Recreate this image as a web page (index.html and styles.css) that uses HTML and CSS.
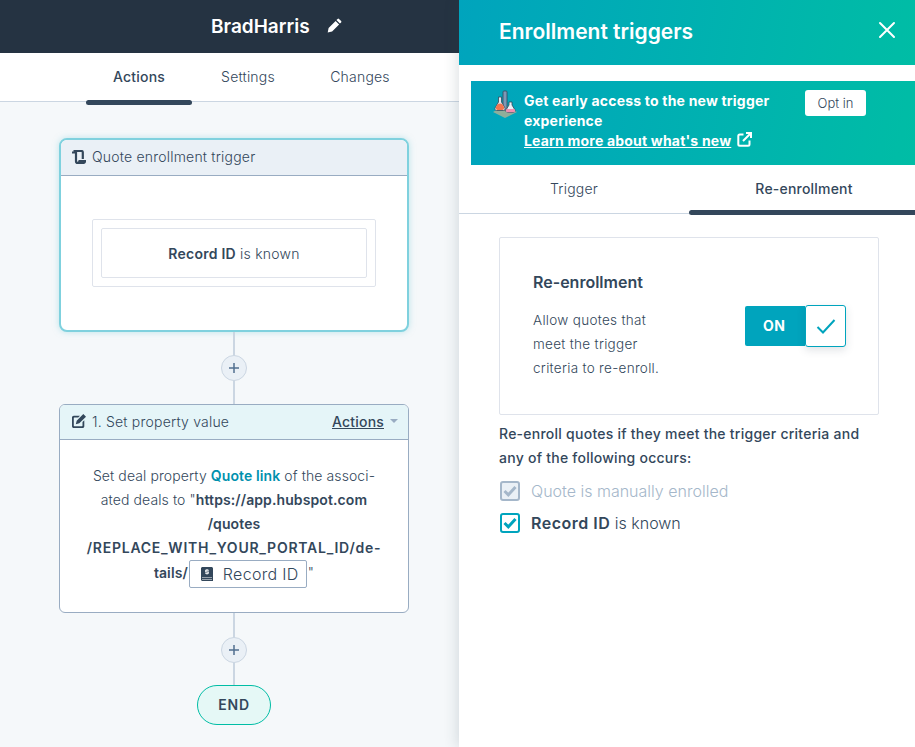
FILE: index.html
```html
<!DOCTYPE html>
<html lang="en">
<head>
    <meta charset="UTF-8">
    <meta name="viewport" content="width=device-width, initial-scale=1.0">
    <title>Enrollment triggers</title>
    <link rel="stylesheet" href="styles.css">
</head>
<body>
    <div class="app">
        <div class="editor">
            <div class="topbar">
                <span class="wfName">BradHarris</span>
                <svg class="pencil" width="15" height="15" viewBox="0 0 15 15"><path fill="#fff" d="M10.600.9a1 1 0 0 1 1.400 0l2.100 2.100a1 1 0 0 1 0 1.400l-1.200 1.200-3.500-3.500zM8.600 2.900l3.500 3.500-7 7-4.400 1 .9-4.500z"/></svg>
            </div>
            <div class="mainTabs">
                <div class="mainTab active">Actions</div>
                <div class="mainTab">Settings</div>
                <div class="mainTab">Changes</div>
            </div>
            <div class="canvas">
                <div class="card triggerCard">
                    <div class="cardHead">
                        <svg width="14" height="14" viewBox="0 0 14 14"><path fill="none" stroke="#33475b" stroke-width="2.200" d="M0 2.500h3.500M1.500 1h8c.8 0 1.300.5 1.300 1.300V9M4 1.500v9.700c0 1 .6 1.700 1.500 1.700s1.500-.7 1.500-1.700"/><path fill="#33475b" d="M6.500 10h7.500v1.500c0 1.400-1 2.500-2.400 2.500H5.500l1-2z"/></svg>
                        <span>Quote enrollment trigger</span>
                    </div>
                    <div class="triggerBody">
                        <div class="filterOuter">
                            <div class="filterInner"><b>Record ID</b> is known</div>
                        </div>
                    </div>
                </div>

                <div class="connector">
                    <div class="plus"><svg width="10" height="10" viewBox="0 0 10 10"><path stroke="#516f90" stroke-width="1.500" d="M5 0v10M0 5h10"/></svg></div>
                </div>

                <div class="card actionCard">
                    <div class="cardHead">
                        <svg width="14" height="14" viewBox="0 0 14 14"><path fill="#33475b" d="M1.800 1.700H8L6.200 3.500H2.300a.5.5 0 0 0-.5.500v7.700c0 .3.200.5.500.500h7.700c.3 0 .5-.2.500-.5V8l1.800-1.800v6c0 1-.8 1.800-1.800 1.800H1.800C.8 14 0 13.200 0 12.200V3.500c0-1 .8-1.800 1.800-1.800zM11.300 0l2.700 2.700-6.700 6.600-3.500.9.900-3.500z"/></svg>
                        <span>1. Set property value</span>
                        <span class="actionsMenu">Actions</span>
                        <span class="caret"></span>
                    </div>
                    <div class="actionBody">
                        Set deal property <b class="propLink">Quote link</b> of the associ-<br>
                        ated deals to "<b>https://app.hubspot.com</b><br>
                        <b>/quotes</b><br>
                        <b class="longPath">/REPLACE_WITH_YOUR_PORTAL_ID/de-</b><br>
                        <b>tails/</b><span class="token"><svg width="12" height="14" viewBox="0 0 12 14"><path fill="#33475b" d="M1.500 0h9c.8 0 1.500.7 1.500 1.500V14H1.500C.7 14 0 13.300 0 12.500v-11C0 .7.700 0 1.500 0zM1 10.500V11h10v-.5zM1 12v.5h10V12z"/><path fill="#fff" d="M5.500 2h1v.8h1.300v1H5.400v.6h2.400v2.400H6.500v.8h-1v-.8H4.200v-1h2.400v-.6H4.200V2.800h1.300z"/></svg>Record ID</span>"
                    </div>
                </div>

                <div class="connector second">
                    <div class="plus"><svg width="10" height="10" viewBox="0 0 10 10"><path stroke="#516f90" stroke-width="1.500" d="M5 0v10M0 5h10"/></svg></div>
                </div>

                <div class="endPill">END</div>
            </div>
        </div>

        <div class="panel">
            <div class="panelHead">
                <h2>Enrollment triggers</h2>
                <svg width="18" height="18" viewBox="0 0 18 18"><path stroke="#fff" stroke-width="2" stroke-linecap="round" d="M2 2l14 14M16 2L2 16"/></svg>
            </div>
            <div class="panelBody">
                <div class="banner">
                    <svg class="flask" width="26" height="28" viewBox="0 0 26 28">
                        <path fill="#8fae9b" d="M13 15l12 7-12 6L1 22z"/>
                        <rect x="11" y="1" width="4" height="19" rx="1" fill="#7c98b6" stroke="#33475b" stroke-width=".8"/>
                        <path fill="#dfe7ef" stroke="#33475b" stroke-width=".8" d="M6.500 7h3v5l3.500 6c.5 1.300-.4 2.500-1.600 2.500H4.500C3.300 20.500 2.500 19.300 3 18l3.500-6z"/>
                        <path fill="#f2754f" d="M4 17c1-2 2-3.500 4-3.500 2 0 3 1.500 4 3.500.5 1.500-.4 3-1.600 3H5.500C4.300 20 3.500 18.500 4 17z"/>
                        <path fill="#eaf0f6" stroke="#33475b" stroke-width=".8" d="M17 12h3v3l3 5c.4 1.200-.4 2.500-1.500 2.500h-6c-1.100 0-1.900-1.300-1.500-2.500l3-5z"/>
                        <path fill="#f28fb0" d="M14.500 19h8l.5 1.500c0 1-.7 1.700-1.500 1.700h-6c-.8 0-1.500-.7-1.500-1.700z"/>
                    </svg>
                    <div class="bannerText">
                        <b>Get early access to the new trigger<br>experience</b><br>
                        <a class="learnMore">Learn more about what's new</a>
                        <svg class="extIcon" width="15" height="15" viewBox="0 0 15 15"><path fill="none" stroke="#fff" stroke-width="2" d="M12.500 8.500v3.700c0 .9-.6 1.500-1.500 1.500H2.800c-.9 0-1.500-.6-1.500-1.500V4c0-.9.600-1.500 1.500-1.500h3.700M6 9l7.500-7.500M9 1h5v5"/></svg>
                    </div>
                    <button class="optIn">Opt in</button>
                </div>
                <div class="panelTabs">
                    <div class="panelTab">Trigger</div>
                    <div class="panelTab active">Re-enrollment</div>
                </div>
                <div class="content">
                    <div class="reCard">
                        <div class="reText">
                            <h3>Re-enrollment</h3>
                            <p>Allow quotes that<br>meet the trigger<br>criteria to re-enroll.</p>
                        </div>
                        <div class="toggle">
                            <span class="toggleOn">ON</span>
                            <span class="toggleKnob">
                                <svg width="20" height="16" viewBox="0 0 20 16"><path fill="none" stroke="#00a4bd" stroke-width="2" d="M1.500 9l5.500 5.500L18.500 2"/></svg>
                            </span>
                        </div>
                    </div>
                    <p class="occurs">Re-enroll quotes if they meet the trigger criteria and<br>any of the following occurs:</p>
                    <div class="checkRow disabled">
                        <span class="box">
                            <svg width="14" height="12" viewBox="0 0 14 12"><path fill="none" stroke="#a5b7ca" stroke-width="3" d="M1.500 6l3.800 3.800L12.500 2"/></svg>
                        </span>
                        <span>Quote is manually enrolled</span>
                    </div>
                    <div class="checkRow">
                        <span class="box">
                            <svg width="14" height="12" viewBox="0 0 14 12"><path fill="none" stroke="#00a4bd" stroke-width="3" d="M1.500 6l3.800 3.800L12.500 2"/></svg>
                        </span>
                        <span><b>Record ID</b> is known</span>
                    </div>
                </div>
            </div>
        </div>
    </div>
</body>
</html>
```

FILE: styles.css
```css
* {
    box-sizing: border-box;
}
html, body {
    margin: 0;
    height: 100%;
    overflow: hidden;
}
body {
    font-family: "Inter", "Open Sans", sans-serif;
    font-size: 14px;
    color: #33475b;
    background: #f5f8fa;
}
b {
    font-weight: 600;
}
.app {
    display: flex;
    height: 747px;
}

/* left side */
.editor {
    width: 459px;
    flex: none;
    display: flex;
    flex-direction: column;
}
.topbar {
    height: 53px;
    background: #253342;
    color: #fff;
    display: flex;
    align-items: center;
    padding-left: 211px;
    gap: 17px;
}
.wfName {
    font-size: 19px;
    font-weight: 600;
}
.pencil {
    margin-bottom: 2px;
}
.mainTabs {
    height: 49px;
    background: #fff;
    border-bottom: 1px solid #cbd6e2;
    display: flex;
    padding-left: 86px;
}
.mainTab {
    height: 49px;
    width: 106px;
    padding-top: 15px;
    text-align: center;
    font-weight: 300;
    letter-spacing: .2px;
}
.mainTab + .mainTab {
    width: 112px;
}
.mainTab.active {
    font-weight: 500;
    position: relative;
}
.mainTab.active::after {
    content: "";
    position: absolute;
    left: 0;
    right: 0;
    bottom: -3px;
    height: 5px;
    border-radius: 3px;
    background: #33475b;
}
.canvas {
    flex: 1;
    display: flex;
    flex-direction: column;
    align-items: center;
    padding-top: 36px;
    padding-left: 9px;
}
.card {
    width: 350px;
    background: #fff;
    border: 1px solid #99acc2;
    border-radius: 6px;
    overflow: hidden;
}
.cardHead {
    display: flex;
    align-items: center;
    gap: 6px;
    padding: 0 11px 2px;
    font-weight: 300;
    letter-spacing: .2px;
    color: #33475b;
}
.triggerCard {
    height: 194px;
    border: 2px solid #7fd1de;
    border-radius: 8px;
    box-shadow: 0 0 6px rgba(127, 209, 222, .5);
}
.triggerCard .cardHead {
    height: 36px;
    background: #eaf0f6;
    border-bottom: 1px solid #99acc2;
}
.triggerBody {
    padding: 43px 31px 0 31px;
}
.filterOuter {
    border: 1px solid #dfe3eb;
    border-radius: 2px;
    padding: 8px;
}
.filterInner {
    height: 50px;
    border: 1px solid #dfe3eb;
    border-radius: 2px;
    display: flex;
    align-items: center;
    justify-content: center;
    gap: 4px;
    font-weight: 300;
    letter-spacing: .25px;
}
.connector {
    width: 2px;
    height: 72px;
    background: #cbd6e2;
    display: flex;
    align-items: center;
    justify-content: center;
}
.connector.second {
    padding-top: 2px;
}
.plus {
    flex: none;
    width: 26px;
    height: 26px;
    border-radius: 50%;
    border: 1px solid #cbd6e2;
    background: #eaf0f6;
    display: flex;
    align-items: center;
    justify-content: center;
}
.actionCard {
    height: 209px;
}
.actionCard .cardHead {
    height: 35px;
    background: #e5f5f8;
    border-bottom: 1px solid #99acc2;
    padding-left: 12px;
    padding-right: 10px;
}
.actionsMenu {
    margin-left: auto;
    font-weight: 500;
    text-decoration: underline;
}
.caret {
    border: 4px solid transparent;
    border-top: 4px solid #99acc2;
    border-bottom: 0;
}
.actionBody {
    padding: 24px 15px 0;
    text-align: center;
    line-height: 24px;
    font-weight: 300;
    letter-spacing: .1px;
    white-space: nowrap;
}
.propLink {
    color: #0091ae;
    font-weight: 600;
}
.longPath {
    letter-spacing: .75px;
}
.token {
    display: inline-flex;
    align-items: center;
    gap: 10px;
    height: 28px;
    width: 118px;
    margin: 0 1px;
    padding-left: 11px;
    border: 1px solid #99acc2;
    border-radius: 2px;
    font-size: 16px;
    letter-spacing: .3px;
    vertical-align: middle;
}
.endPill {
    width: 74px;
    height: 40px;
    border: 1px solid #00bda5;
    border-radius: 20px;
    background: #e5f8f6;
    font-weight: 600;
    letter-spacing: .8px;
    text-align: center;
    line-height: 38px;
}

/* right panel */
.panel {
    flex: none;
    width: 456px;
    position: relative;
    background: #fff;
    box-shadow: -3px 0 12px rgba(45, 62, 80, .14);
    display: flex;
    flex-direction: column;
}
.panelHead {
    height: 65px;
    background: linear-gradient(100deg, #00a4bd, #00bda5);
    color: #fff;
    display: flex;
    align-items: center;
    justify-content: space-between;
    padding: 0 19px 6px 40px;
}
.panelHead h2 {
    margin: 4px 0 0;
    font-size: 21px;
    font-weight: 600;
}
.panelBody {
    padding: 16px 0 0 12px;
}
.banner {
    height: 84px;
    background: linear-gradient(100deg, #00a4bd, #00bda5);
    color: #fff;
    display: flex;
    align-items: flex-start;
    padding: 10px 0 0 21px;
}
.flask {
    flex: none;
    margin: -1px 6px 0 0;
}
.bannerText {
    width: 281px;
    font-size: 14px;
    line-height: 20px;
    letter-spacing: .2px;
}
.bannerText b {
    font-weight: 700;
}
.learnMore {
    font-weight: 700;
    text-decoration: underline;
}
.extIcon {
    vertical-align: -1px;
    margin-left: 2px;
}
.optIn {
    width: 61px;
    height: 26px;
    margin-top: -1px;
    background: #fff;
    border: none;
    border-radius: 3px;
    font-family: inherit;
    font-size: 13px;
    font-weight: 300;
    color: #33475b;
    padding: 0;
}
.panelTabs {
    display: flex;
    margin-left: -12px;
    height: 49px;
    border-bottom: 1px solid #cbd6e2;
}
.panelTab {
    width: 230px;
    padding-top: 15px;
    text-align: center;
    font-weight: 300;
    letter-spacing: .2px;
}
.panelTab.active {
    flex: 1;
    padding-left: 4px;
    font-weight: 500;
    position: relative;
}
.panelTab.active::after {
    content: "";
    position: absolute;
    left: 0;
    right: 0;
    bottom: -2px;
    height: 5px;
    border-radius: 3px 0 0 3px;
    background: #33475b;
}
.content {
    margin-left: -12px;
    padding: 23px 36px 0 40px;
}
.reCard {
    height: 178px;
    border: 1px solid #dfe3eb;
    border-radius: 2px;
    display: flex;
    align-items: flex-start;
    padding: 32px 32px 0 33px;
}
.reText {
    width: 212px;
    flex: none;
}
.reText h3 {
    margin: 0;
    font-size: 16px;
    font-weight: 600;
    line-height: 24px;
}
.reText p {
    margin: 14px 0 0;
    font-size: 13.500px;
    font-weight: 300;
    line-height: 24px;
    letter-spacing: .3px;
}
.toggle {
    display: flex;
    align-items: center;
    margin-top: 35px;
}
.toggleOn {
    width: 60px;
    height: 40px;
    background: #00a4bd;
    color: #fff;
    font-weight: 700;
    font-size: 14px;
    letter-spacing: .4px;
    border-radius: 2px 0 0 2px;
    line-height: 40px;
    padding-left: 18px;
}
.toggleKnob {
    width: 41px;
    height: 42px;
    background: #fff;
    border: 1px solid #00a4bd;
    border-radius: 3px;
    display: flex;
    align-items: center;
    justify-content: center;
    box-shadow: 0 3px 8px rgba(45, 62, 80, .15);
}
.occurs {
    margin: 7px 0 5px;
    font-weight: 500;
    font-size: 14px;
    line-height: 24px;
    letter-spacing: .25px;
}
.checkRow {
    display: flex;
    align-items: center;
    gap: 11px;
    height: 32px;
    font-size: 16px;
    font-weight: 300;
}
.checkRow b {
    letter-spacing: .5px;
}
.box {
    width: 20px;
    height: 20px;
    flex: none;
    margin-left: 1px;
    border: 2px solid #00a4bd;
    border-radius: 3px;
    display: flex;
    align-items: center;
    justify-content: center;
}
.checkRow.disabled {
    color: #a5b7ca;
}
.checkRow.disabled .box {
    border-color: #a5b7ca;
    background: #eaf0f6;
}
```
